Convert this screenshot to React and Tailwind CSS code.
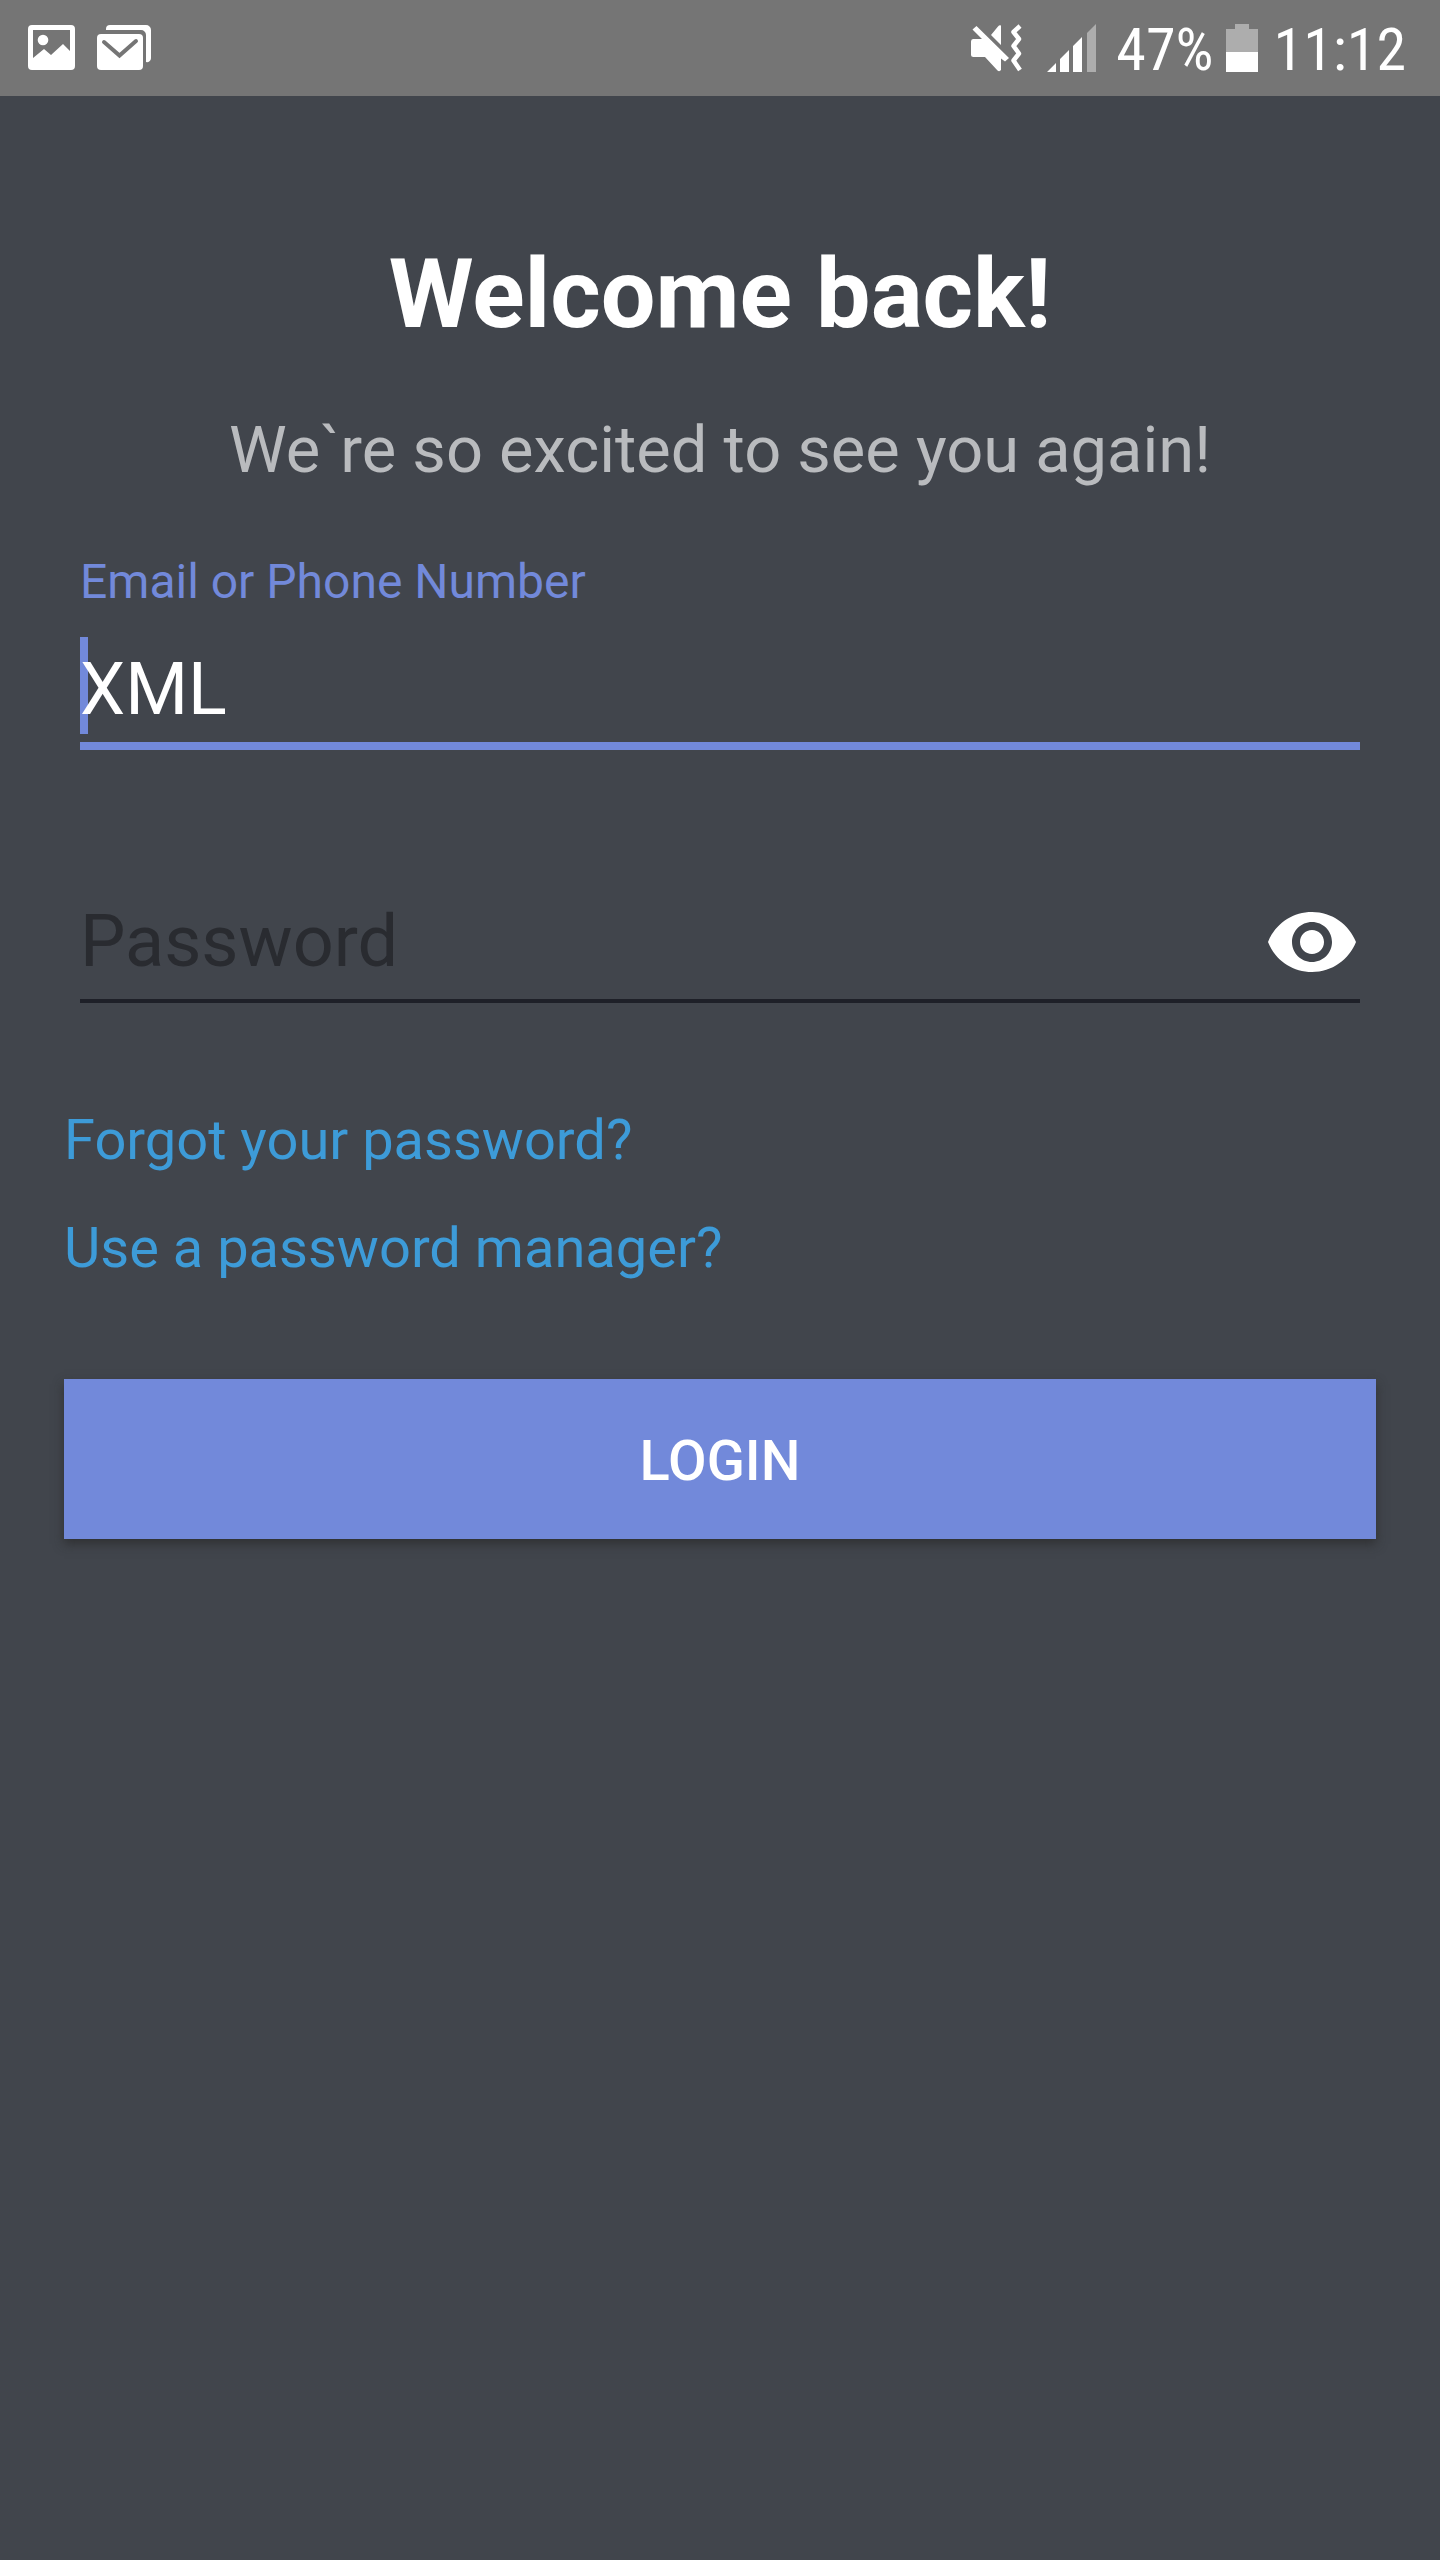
import { useState } from "react";

function PictureIcon() {
  return (
    <svg width="48" height="46" viewBox="0 0 48 46" role="img" aria-label="Screenshot saved">
      <path
        fill="#fff"
        fillRule="evenodd"
        d="M4 0h39a4 4 0 0 1 4 4v37a4 4 0 0 1-4 4H4a4 4 0 0 1-4-4V4a4 4 0 0 1 4-4ZM5 5v28l11-9 7 6 12-11 7 7V5H5Z"
      />
      <circle cx="15" cy="15" r="5.3" fill="#fff" />
    </svg>
  );
}

function MailIcon() {
  return (
    <svg width="54" height="46" viewBox="0 0 54 46" role="img" aria-label="New mail">
      <path fill="#fff" d="M9 5V4a4 4 0 0 1 4-4h36a5 5 0 0 1 5 5v28a4 4 0 0 1-5 4V10a5 5 0 0 0-5-5H9Z" />
      <rect y="9" width="46" height="36" rx="4" fill="#fff" />
      <path d="M7 17l15.500 13.500L39 16" fill="none" stroke="#757575" strokeWidth="4" strokeLinecap="round" />
    </svg>
  );
}

function MuteIcon() {
  return (
    <svg width="52" height="48" viewBox="0 0 52 48" role="img" aria-label="Vibrate mode">
      <path fill="#fff" d="M30 1.500v19.500L20 11 27 2.500Q28.500.5 30 1.500Z" />
      <path fill="#fff" d="M2 15h9L1.500 5.500 5.500 2l32.500 32-4 3.500-4-3v11.500q-1.500 2-3.500.5L14 33H2.500Q0 33 0 30.500V17.500Q0 15 2 15Z" />
      <path
        d="M49 2l-6.500 6L48 15l-5.500 7 5.500 7.500-5.500 7L49 46"
        fill="none"
        stroke="#fff"
        strokeWidth="4.500"
        strokeLinejoin="round"
      />
    </svg>
  );
}

function SignalIcon() {
  return (
    <svg width="49" height="48" viewBox="0 0 49 48" role="img" aria-label="Mobile signal">
      <path fill="#fff" d="M0 48l9-9v9ZM13 35l9-9v22h-9ZM26 22l9-9v35h-9Z" />
      <path fill="#adadad" d="M40 9l9-9v48h-9Z" />
    </svg>
  );
}

function BatteryIcon() {
  return (
    <svg width="32" height="48" viewBox="0 0 32 48" role="img" aria-label="Battery">
      <path fill="#adadad" d="M9 0h14v5h9v23H0V5h9Z" />
      <path fill="#fff" d="M0 28h32v20H0Z" />
    </svg>
  );
}

function EyeIcon() {
  return (
    <svg width="96" height="96" viewBox="0 0 24 24" fill="#fff" aria-hidden="true">
      <path d="M12 4.500C7 4.500 2.730 7.610 1 12c1.730 4.390 6 7.500 11 7.500s9.270-3.110 11-7.500c-1.730-4.390-6-7.500-11-7.500zM12 17c-2.760 0-5-2.240-5-5s2.240-5 5-5 5 2.240 5 5-2.240 5-5 5zm0-8c-1.660 0-3 1.340-3 3s1.340 3 3 3 3-1.340 3-3-1.340-3-3-3z" />
    </svg>
  );
}

function StatusBar() {
  return (
    <header className="flex h-24 items-center justify-between bg-[#757575] pr-[34px] pl-7 text-white">
      <div className="flex items-center gap-[21px]">
        <PictureIcon />
        <MailIcon />
      </div>
      <div className="flex items-center font-['Roboto_Condensed',Roboto,sans-serif] text-[60px] leading-[70px]">
        <MuteIcon />
        <span className="ml-6 flex">
          <SignalIcon />
        </span>
        <span className="mt-1 ml-5">47%</span>
        <span className="ml-3 flex">
          <BatteryIcon />
        </span>
        <time className="mt-1 ml-4">11:12</time>
      </div>
    </header>
  );
}

export default function App() {
  const [email, setEmail] = useState("XML");
  const [password, setPassword] = useState("");
  const [visible, setVisible] = useState(false);

  return (
    <div className="flex min-h-screen flex-col bg-[#41454c] font-[Roboto,sans-serif]">
      <StatusBar />
      <main className="px-16 pt-[142px] pb-16">
        <h1 className="text-center text-[97px] leading-[112px] font-bold text-white">Welcome back!</h1>
        <p className="mt-[62px] text-center text-[65px] leading-[76px] text-[#b9bbbe]">
          We`re so excited to see you again!
        </p>

        <form onSubmit={(e) => e.preventDefault()}>
          <div className="mx-4 mt-[66px]">
            <label htmlFor="email" className="block text-[48px] leading-[56px] text-[#7289da]">
              Email or Phone Number
            </label>
            <div className="relative">
              <span className="absolute top-[27px] left-0 h-[97px] w-2 bg-[#7289da]" />
              <input
                id="email"
                type="text"
                value={email}
                onChange={(e) => setEmail(e.target.value)}
                className="relative block h-[140px] w-full border-b-8 border-[#7289da] bg-transparent pt-[26px] text-[72px] leading-[84px] text-white outline-none"
              />
            </div>
          </div>

          <div className="mx-4 mt-[136px] flex items-center border-b-4 border-[#1e2028] pt-2 pb-[9px]">
            <input
              id="password"
              type={visible ? "text" : "password"}
              aria-label="Password"
              placeholder="Password"
              value={password}
              onChange={(e) => setPassword(e.target.value)}
              className="min-w-0 flex-1 bg-transparent text-[72px] leading-[84px] text-white outline-none placeholder:text-[#292b30]"
            />
            <button type="button" aria-label="Show password" onClick={() => setVisible(!visible)}>
              <EyeIcon />
            </button>
          </div>

          <div className="mt-[104px] flex flex-col items-start gap-[42px] text-[56px] leading-[66px] text-[#3d9bd8]">
            <a href="#forgot">Forgot your password?</a>
            <a href="#manager">Use a password manager?</a>
          </div>

          <button
            type="submit"
            className="mt-[98px] block h-40 w-full bg-[#7289da] pt-1 text-[56px] leading-[66px] font-medium text-white shadow-[0_5px_10px_rgba(40,40,40,0.7)]"
          >
            LOGIN
          </button>
        </form>
      </main>
    </div>
  );
}
